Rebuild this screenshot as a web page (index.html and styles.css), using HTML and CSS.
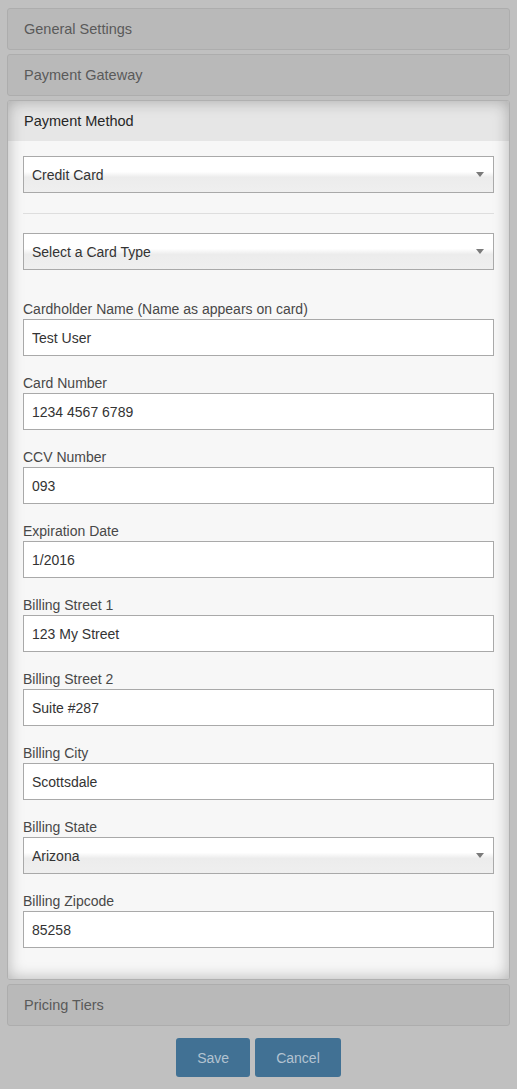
FILE: index.html
```html
<!DOCTYPE html>
<html>
<head>
<meta charset="utf-8">
<title>Payment Settings</title>
<link rel="stylesheet" href="styles.css">
</head>
<body>
<div class="panel-group">
  <div class="panel"><div class="panel-heading">General Settings</div></div>
  <div class="panel"><div class="panel-heading">Payment Gateway</div></div>
  <div class="panel active">
    <div class="panel-heading">Payment Method</div>
    <div class="panel-body">
      <div class="select-wrap">
        <select class="control select"><option>Credit Card</option></select>
      </div>
      <hr class="divider">
      <div class="select-wrap spaced">
        <select class="control select"><option>Select a Card Type</option></select>
      </div>
      <div class="field">
        <label class="label">Cardholder Name (Name as appears on card)</label>
        <input class="control" type="text" value="Test User">
      </div>
      <div class="field">
        <label class="label">Card Number</label>
        <input class="control" type="text" value="1234 4567 6789">
      </div>
      <div class="field">
        <label class="label">CCV Number</label>
        <input class="control" type="text" value="093">
      </div>
      <div class="field">
        <label class="label">Expiration Date</label>
        <input class="control" type="text" value="1/2016">
      </div>
      <div class="field">
        <label class="label">Billing Street 1</label>
        <input class="control" type="text" value="123 My Street">
      </div>
      <div class="field">
        <label class="label">Billing Street 2</label>
        <input class="control" type="text" value="Suite #287">
      </div>
      <div class="field">
        <label class="label">Billing City</label>
        <input class="control" type="text" value="Scottsdale">
      </div>
      <div class="field">
        <label class="label">Billing State</label>
        <div class="select-wrap">
          <select class="control select"><option>Arizona</option></select>
        </div>
      </div>
      <div class="field">
        <label class="label">Billing Zipcode</label>
        <input class="control" type="text" value="85258">
      </div>
    </div>
  </div>
  <div class="panel"><div class="panel-heading">Pricing Tiers</div></div>
</div>
<div class="actions">
  <button class="btn">Save</button>
  <button class="btn">Cancel</button>
</div>
</body>
</html>
```
FILE: styles.css
```css
* { box-sizing: border-box; }

body {
  margin: 0;
  padding: 8px 7px 0;
  background: #c0c0c0;
  font-family: "Liberation Sans", Arial, sans-serif;
  font-size: 14px;
  color: #333;
}

.panel-group {
  display: flex;
  flex-direction: column;
  gap: 4px;
}

.panel {
  border: 1px solid #adadad;
  border-radius: 3px;
  background: #b9b9b9;
}

.panel-heading {
  height: 40px;
  line-height: 40px;
  padding: 0 16px;
  font-size: 14.5px;
  color: #5a5a5a;
}

.panel.active {
  border-color: #b0b0b0;
  background: linear-gradient(#e6e6e6 0, #e6e6e6 40px, #f7f7f7 40px, #f7f7f7 100%);
  box-shadow: inset 0 0 16px rgba(0, 0, 0, 0.28);
}

.panel.active .panel-heading {
  color: #262626;
}

.panel-body {
  padding: 15px 15px 14px;
}

.control {
  display: block;
  width: 100%;
  height: 37px;
  margin: 0;
  padding: 0 8px;
  border: 1px solid #a9a9a9;
  border-radius: 0;
  background: #fff;
  font-family: "Liberation Sans", Arial, sans-serif;
  font-size: 14px;
  color: #333;
  outline: none;
}

.select {
  -webkit-appearance: none;
  appearance: none;
  background: linear-gradient(#ffffff 0%, #ffffff 42%, #ececec 58%, #efefef 100%);
}

.select-wrap {
  position: relative;
}

.select-wrap::after {
  content: "";
  position: absolute;
  right: 10px;
  top: 16px;
  border-left: 4px solid transparent;
  border-right: 4px solid transparent;
  border-top: 5px solid #7a7a7a;
}

.select-wrap.spaced {
  margin-bottom: 29px;
}

.divider {
  margin: 20px 0 19px;
  border: 0;
  border-top: 1px solid #dedede;
  height: 0;
}

.field {
  margin-bottom: 17px;
}

.field:last-child {
  margin-bottom: 17px;
}

.label {
  display: block;
  line-height: 20px;
  color: #484848;
}

.actions {
  display: flex;
  justify-content: center;
  gap: 5px;
  margin-top: 12px;
}

.btn {
  height: 39px;
  padding: 0 21px;
  border: 0;
  border-radius: 3px;
  background: #417194;
  color: #b3c3d1;
  font-family: "Liberation Sans", Arial, sans-serif;
  font-size: 14px;
}
```
